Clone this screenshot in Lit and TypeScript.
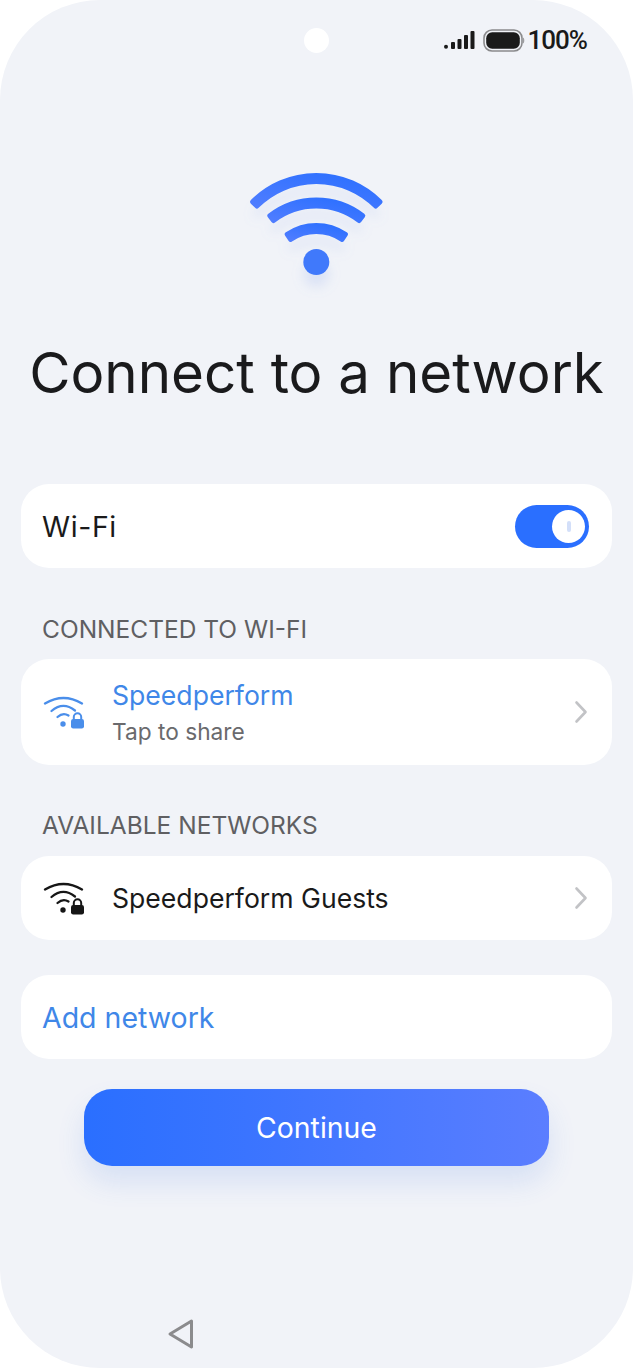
import { LitElement, html, css, svg } from "lit";
import { customElement } from "lit/decorators.js";

const wifiSmall = (color: string) => svg`
  <svg class="wifi" width="44" height="36" viewBox="0 0 44 36" fill="none" stroke=${color} stroke-linecap="round" stroke-width="2.300">
    <path d="M3 9.500Q21.500 -1.500 40 9.500"/>
    <path d="M9.500 17Q21 7 33 16.500" />
    <path d="M15.500 23Q21 18 26.500 21.500" />
    <circle cx="21" cy="30" r="2.700" fill=${color} stroke="none"/>
    <path d="M31.800 26v-3a3.700 3.700 0 0 1 7.400 0v3" stroke-width="2" />
    <rect x="29" y="25" width="13" height="9.500" rx="2.200" fill=${color} stroke="none"/>
  </svg>`;

const chevron = svg`
  <svg width="14" height="24" viewBox="0 0 14 24" fill="none" stroke="#c2c3c6" stroke-width="2.600" stroke-linecap="round" stroke-linejoin="round">
    <path d="M2.500 2.500L11.500 12L2.500 21.500"/>
  </svg>`;

// An arc band of the hero wifi glyph, centred on (cx, cy); the rounded corners come from the stroke.
const band = (cx: number, cy: number, r: number, half: number, t = 3) => {
  const a = (half * Math.PI) / 180;
  const s = Math.sin(a);
  const c = Math.cos(a);
  const o = r + t;
  const i = r - t;
  return `M${cx - o * s} ${cy - o * c}A${o} ${o} 0 0 1 ${cx + o * s} ${cy - o * c}L${cx + i * s} ${cy - i * c}A${i} ${i} 0 0 0 ${cx - i * s} ${cy - i * c}Z`;
};
const arcs = [
  band(66.300, 97.500, 87, 45),
  band(66.300, 108.500, 73.500, 37.400),
  band(66.300, 109.500, 49, 34),
];

@customElement("app-root")
export class AppRoot extends LitElement {
  static styles = css`
    :host {
      display: block;
      width: 633px;
      height: 1368px;
      background: #fff;
      font-family: "Inter", "Noto Sans", sans-serif;
      color: #1a1a1a;
    }
    .screen {
      position: relative;
      height: 1368px;
      box-sizing: border-box;
      background: #f1f3f8;
      border-radius: 100px;
      padding: 0 21px;
      display: flex;
      flex-direction: column;
      overflow: hidden;
    }
    .camera {
      position: absolute;
      left: 304px;
      top: 28px;
      width: 25px;
      height: 25px;
      border-radius: 50%;
      background: #fff;
    }
    .status {
      height: 80px;
      display: flex;
      align-items: center;
      justify-content: flex-end;
      gap: 4px;
      padding-right: 25px;
      box-sizing: border-box;
      font-family: "Roboto", sans-serif;
      font-size: 26px;
      font-weight: 500;
      letter-spacing: -1px;
      color: #1a1a1a;
    }
    .status .icons {
      display: flex;
      align-items: center;
      gap: 8px;
    }
    .batt { display: block; margin-right: -1px; }
    .hero {
      display: flex;
      justify-content: center;
      margin-top: 88px;
    }
    h1 {
      margin: 35px -21px 0;
      font-size: 56.500px;
      font-weight: 400;
      line-height: 80px;
      text-align: center;
      white-space: nowrap;
      color: #1a1a1c;
    }
    .card {
      background: #fff;
      border-radius: 28px;
      display: flex;
      align-items: center;
      padding: 0 21px;
      font-size: 28.500px;
    }
    .wifi-card { height: 84px; margin-top: 71px; justify-content: space-between; padding-right: 23px; }
    .wifi-card span { letter-spacing: 0.6px; }
    .toggle {
      width: 74px;
      height: 43px;
      border-radius: 22px;
      background: #2a6fff;
      display: flex;
      align-items: center;
      justify-content: flex-end;
      padding: 0 4px;
      box-sizing: border-box;
    }
    .knob {
      width: 33px;
      height: 33px;
      border-radius: 50%;
      background: #fff;
      display: flex;
      align-items: center;
      justify-content: center;
    }
    .knob i {
      width: 4px;
      height: 11px;
      border-radius: 2px;
      background: #d3dff9;
    }
    .label {
      font-size: 24.500px;
      line-height: 32px;
      color: #5f5f62;
      padding-left: 21px;
    }
    .l1 { margin-top: 45px; margin-bottom: 14px; }
    .l2 { margin-top: 44px; margin-bottom: 15px; }
    .row { gap: 26px; }
    .row .txt { flex: 1; min-width: 0; }
    .row1 { height: 106px; }
    .row2 { height: 84px; }
    .name { font-size: 26.600px; line-height: 36px; color: #1a1a1a; }
    .name.blue { color: #3f87e8; }
    .sub { font-size: 22.700px; line-height: 32px; color: #6a6a6d; margin-top: 3px; }
    .chev { margin-right: 3px; display: flex; }
    .add { height: 84px; margin-top: 35px; }
    .add span { font-size: 28.500px; color: #3f87e8; }
    .btn {
      margin: 30px 63px 0;
      height: 77px;
      border-radius: 28px;
      background: linear-gradient(90deg, #2a6fff 0%, #3a74ff 35%, #5b7eff 100%);
      box-shadow: 0 16px 28px rgba(60, 110, 230, 0.14);
      color: #fff;
      font-size: 28.400px;
      display: flex;
      align-items: center;
      justify-content: center;
      box-sizing: border-box;
    }
    .nav {
      margin-top: auto;
      padding: 0 0 18px 146px;
      display: flex;
    }
    .wifi { display: block; }
    .hero svg { display: block; overflow: visible; }
  `;

  render() {
    return html`
      <div class="screen">
        <div class="camera"></div>
        <div class="status">
          <div class="icons">
            <svg width="31" height="18" viewBox="0 0 31 18" fill="#1a1a1a">
              <circle cx="2" cy="15.800" r="2"/>
              <rect x="7" y="11" width="4" height="7" rx="1"/>
              <rect x="13.500" y="8" width="4" height="10" rx="1"/>
              <rect x="20" y="4" width="4" height="14" rx="1"/>
              <rect x="26.500" y="0" width="4" height="18" rx="1"/>
            </svg>
            <svg class="batt" width="42" height="23" viewBox="0 0 42 23">
              <rect x="1" y="1" width="38" height="21" rx="8" fill="none" stroke="#8a8a8c" stroke-width="1.600"/>
              <rect x="3.200" y="3.200" width="33.600" height="16.600" rx="6" fill="#1a1a1a"/>
              <path d="M40.200 8.500c1.400.6 1.400 5.400 0 6z" fill="#8a8a8c"/>
            </svg>
          </div>
          <span>100%</span>
        </div>
        <div class="hero">
          <svg width="134" height="130" viewBox="0 0 134 130" fill="none">
            <defs>
              <linearGradient id="g" x1="0" y1="1" x2="1" y2="0">
                <stop offset="0" stop-color="#4f7dff"/>
                <stop offset="1" stop-color="#2a6fff"/>
              </linearGradient>
              <filter id="b" x="-30%" y="-30%" width="160%" height="170%">
                <feGaussianBlur stdDeviation="6"/>
              </filter>
            </defs>
            <g fill="#8fa9ee" fill-opacity=".22" filter="url(#b)" transform="translate(0 12)">
              ${arcs.map((d) => svg`<path d=${d}/>`)}
              <circle cx="66.300" cy="94" r="13"/>
            </g>
            <g fill="url(#g)" stroke="url(#g)" stroke-width="5" stroke-linejoin="round">
              ${arcs.map((d) => svg`<path d=${d}/>`)}
            </g>
            <circle cx="66.300" cy="94" r="13" fill="#4079fb"/>
          </svg>
        </div>
        <h1>Connect to a network</h1>
        <div class="card wifi-card">
          <span>Wi-Fi</span>
          <div class="toggle"><div class="knob"><i></i></div></div>
        </div>
        <div class="label l1">CONNECTED TO WI-FI</div>
        <div class="card row row1">
          ${wifiSmall("#4a8eea")}
          <div class="txt">
            <div class="name blue">Speedperform</div>
            <div class="sub">Tap to share</div>
          </div>
          <span class="chev">${chevron}</span>
        </div>
        <div class="label l2">AVAILABLE NETWORKS</div>
        <div class="card row row2">
          ${wifiSmall("#161616")}
          <div class="txt"><div class="name">Speedperform Guests</div></div>
          <span class="chev">${chevron}</span>
        </div>
        <div class="card add"><span>Add network</span></div>
        <div class="btn">Continue</div>
        <div class="nav">
          <svg width="28" height="32" viewBox="0 0 28 32" fill="none" stroke="#8b8b8d" stroke-width="3" stroke-linejoin="round">
            <path d="M24.500 3L3 16L24.500 29Z"/>
          </svg>
        </div>
      </div>
    `;
  }
}
